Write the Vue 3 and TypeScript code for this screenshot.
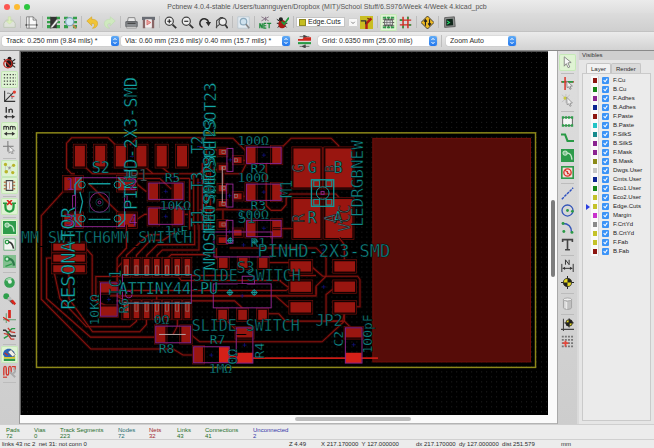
<script setup lang="ts">
import { reactive, ref } from 'vue'

type Tool = { id?: string; label?: string; on?: boolean; sep?: boolean }
type Box = [number, number, number, number]
type Label = { t: string; x: number; y: number; s: number; c?: string; v?: boolean }

const icons: Record<string, string> = {
  save: '<path d="M1 9l3-4h8l3 4v5H1z" fill="#dfe3da" stroke="#b9c4b0"/><path d="M6.500 1h3v5h2.500L8 10 4 6h2.500z" fill="#dcefbb" stroke="#c3dda0" stroke-width=".6"/>',
  page: '<path d="M2 1h8l4 4v10H2z" fill="#fafafa" stroke="#777"/><path d="M10 1v4h4M5 1v14M2 11h12" fill="none" stroke="#666"/><path d="M0 11l2-1.500v3zM16 11l-2-1.500v3z" fill="#333"/>',
  modedit: '<path d="M0 1h5v3H0zM0 6h5v3H0zM0 11h5v4H0zM11 1h5v3h-5zM11 6h5v3h-5zM11 11h5v4h-5z" fill="#35a04a"/><path d="M4 1h8v14H4z" fill="#333"/><path d="M5 13l7-9 2 2-7 8-3 1z" fill="#f4f4f4" stroke="#555" stroke-width=".7"/>',
  modview: '<path d="M0 1h5v3H0zM0 6h5v3H0zM0 11h5v4H0zM11 1h5v3h-5zM11 6h5v3h-5zM11 11h5v4h-5z" fill="#35a04a"/><circle cx="7" cy="7" r="5" fill="#cfe6f2" stroke="#7fa6ba" stroke-width="1.500"/><path d="M11 11l4 4" stroke="#b98b50" stroke-width="2.400"/>',
  undo: '<path d="M1 6l6-5v3c6 0 8 3 7 7-1 3-3 4-6 4 3-2 4-6-1-6v3z" fill="#f0c437" stroke="#d5a21b" stroke-width=".7"/>',
  redo: '<path d="M15 6L9 1v3C3 4 1 7 2 11c1 3 3 4 6 4-3-2-4-6 1-6v3z" fill="#cfe9bf" stroke="#bcdcab" stroke-width=".7"/>',
  print: '<path d="M4 2h8l1 5H3z" fill="#e8e8e8" stroke="#777"/><path d="M1 7h14v6H1z" fill="#8a8d90" stroke="#505356"/><path d="M2 13h12v2H2z" fill="#dcdcdc" stroke="#777" stroke-width=".6"/><path d="M3 9h10" stroke="#3b3b3b" stroke-width="1.300"/>',
  plot: '<path d="M0 1h16v4H0z" fill="#6a6d74"/><path d="M1 5h3v10H1zM12 5h3v10h-3z" fill="#866"/><path d="M4 4h8v10H4z" fill="#f4eded"/><path d="M6 5l5 3-5 3z" fill="#e7a5a0" stroke="#c33" stroke-width=".6"/>',
  zoomin: '<circle cx="6.500" cy="6.500" r="5" fill="#eee" stroke="#444" stroke-width="1.500"/><path d="M10.500 10.500l4.500 4.500" stroke="#333" stroke-width="2.200"/><path d="M4 6.500h5M6.500 4v5" stroke="#222" stroke-width="1.400"/>',
  zoomout: '<circle cx="6.500" cy="6.500" r="5" fill="#eee" stroke="#444" stroke-width="1.500"/><path d="M10.500 10.500l4.500 4.500" stroke="#333" stroke-width="2.200"/><path d="M4 6.500h5" stroke="#222" stroke-width="1.400"/>',
  redraw: '<path d="M5.500 14A5.500 5.500 0 1 1 13 7.500" fill="none" stroke="#2b2b2b" stroke-width="2"/><path d="M9.500 7.500H16l-3 5z" fill="#2b2b2b"/>',
  fit: '<path d="M2 15V6l5-4h3M1 14l5-4" fill="none" stroke="#444" stroke-width="1.300"/><circle cx="9.500" cy="7" r="4.500" fill="#eee" stroke="#444" stroke-width="1.500"/><path d="M12.500 10.500l3 4.500" stroke="#333" stroke-width="2"/>',
  find: '<path d="M1 1h14v14H1z" fill="#e4edf3" stroke="#b9c6cf"/><circle cx="8" cy="7" r="4" fill="#cfe2ee" stroke="#8caabd" stroke-width="1.500"/><path d="M11 10l4 5" stroke="#888" stroke-width="2"/>',
  net: '<path d="M1 15V9l3 6V9M6 9v6h3M6 12h3M6 9h3M10 9h5M12.500 9v6" stroke="#1e8a3b" stroke-width="1.500" fill="none"/><path d="M3 1l9 5M3 6l9-5M8 1v5" stroke="#878" stroke-width="1.200"/>',
  drc: '<path d="M1 4l4 3M1 9h3M2 14l4-3M14 9l-4 0M13 14l-3-3" stroke="#222" stroke-width="1.200"/><ellipse cx="7.500" cy="10" rx="4.500" ry="5" fill="#a81c16"/><circle cx="6" cy="4" r="2.500" fill="#222"/><path d="M7 7l3 3 6-8" stroke="#1f9a3b" stroke-width="2.200" fill="none"/>',
  autotrack: '<path d="M0 0h16v16H0z" fill="#c9bd22"/><path d="M8 16V9l6-6" stroke="#b31f14" stroke-width="3" fill="none"/><path d="M1 6h6v4" stroke="#333" stroke-width="1.600" fill="none"/><path d="M9 3l3 1" stroke="#6b2b10" stroke-width="1.500"/>',
  modmode: '<path d="M1 4h14M1 8h14M1 12h14M4 1v14M8 1v14M12 1v14" stroke="#444" stroke-width="1"/><path d="M1 1h4v2H1zM6 1h4v2H6zM11 1h4v2h-4zM1 13h4v2H1zM6 13h4v2H6zM11 13h4v2h-4z" fill="#2f9c49"/><path d="M3 5h10v6H3z" fill="#ddd" stroke="#444" stroke-width=".8"/><path d="M3 8h10M6 5v6M10 5v6" stroke="#666" stroke-width=".8"/>',
  trackmode: '<path d="M5 1v14M11 1v14" stroke="#cf2a20" stroke-width="1.800"/><path d="M1 5h14M1 11h14" stroke="#cf2a20" stroke-width="1.600"/><path d="M1 5h3M12 11h3M11 1v3M5 12v3" stroke="#2a9a46" stroke-width="2"/>',
  route: '<path d="M8 0l8 8-8 8-8-8z" fill="#f0bb25" stroke="#222"/><path d="M5.500 12V6M3.800 7l1.700-2.500L7.200 7M10.500 4v6M8.800 9l1.700 2.500L12.200 9" stroke="#222" stroke-width="1.400" fill="none"/>',
  console: '<path d="M2 2l12-1 1 12-13 1z" fill="#8d8f8e" stroke="#555"/><path d="M4 4l8-.5.500 8L4 12z" fill="#10251a"/><path d="M5 6l3 2-3 2" stroke="#28e070" stroke-width="1.300" fill="none"/>',
  nodrc: '<ellipse cx="8" cy="9.500" rx="4.500" ry="5" fill="#201818"/><circle cx="8" cy="3.500" r="2.500" fill="#201818"/><path d="M1 4l4 3M15 4l-4 3M15 14l-4-3M15 9h-4" stroke="#222" stroke-width="1.300"/><circle cx="6" cy="9.500" r="5" fill="none" stroke="#c22a22" stroke-width="1.600"/><path d="M2.500 6l7 7" stroke="#c22a22" stroke-width="1.600"/>',
  dots: '<path d="M1 2h15M1 6h15M1 10h15M1 14h15" stroke="#444" stroke-width="1.400" stroke-dasharray="1.600 2"/>',
  polar: '<path d="M2 1v13h13M2 14L13 3" stroke="#333" stroke-width="1.300" fill="none"/><path d="M5 4c4-1 7 3 6 7" stroke="#555" fill="none"/><circle cx="14" cy="2.500" r="2" fill="#e23a2e"/><path d="M10 8h4" stroke="#d44" stroke-width="1.500"/>',
  inch: '<path d="M4 0v7M7.500 7V2.500M7.500 4c1-2 4-2 4 .5V7" stroke="#333" stroke-width="1.700" fill="none"/><path d="M3 12h10" stroke="#333" stroke-width="1.300"/><path d="M1 12l4-2.500v5zM15 12l-4-2.500v5z" fill="#333"/>',
  mm: '<path d="M1 7V2.500M1 4c1-1.800 3-1.500 3 .5V7M4 4.500c1-2.300 3-1.500 3 .5V7M9 7V2.500M9 4c1-1.800 3-1.500 3 .5V7M12 4.500c1-2.300 3-1.500 3 .5V7" stroke="#333" stroke-width="1.300" fill="none"/><path d="M3 12h10" stroke="#333" stroke-width="1.300"/><path d="M1 12l4-2.500v5zM15 12l-4-2.500v5z" fill="#333"/>',
  cursor: '<path d="M6 0v13M0 6.500h13" stroke="#777" stroke-width="1.200"/><path d="M7 6l7 6-3 .4 1.500 3-1.500.6-1.500-3L7.500 15z" fill="#eee" stroke="#777" stroke-width=".8"/>',
  ratsnest: '<path d="M3 3l8 9M12 4L4 12M3 3v9" stroke="#bbb" stroke-width=".8"/><circle cx="3" cy="3" r="2" fill="#b8b62a"/><circle cx="13" cy="4" r="2" fill="#b8b62a"/><circle cx="4" cy="12" r="2.200" fill="#b8b62a"/><circle cx="12" cy="13" r="2" fill="#b8b62a"/><circle cx="8" cy="7" r="1.500" fill="#999"/>',
  modrats: '<path d="M4 2h8v12H4z" fill="#eee" stroke="#444" stroke-width="1.300"/><path d="M1 4h3M1 8h3M1 12h3M12 4h3M12 8h3M12 12h3" stroke="#b87c56" stroke-width="1.800"/><path d="M8 4v8" stroke="#c98" stroke-width="1.300"/>',
  autodel: '<path d="M3 4v5c0 7 10 7 10 0V4" fill="none" stroke="#239a3e" stroke-width="2.800"/><path d="M0 4h5M11 4h5" stroke="#239a3e" stroke-width="2"/><path d="M5 0l6 6M11 0L5 6" stroke="#d8281e" stroke-width="2"/>',
  zonefill: '<path d="M0 0h16v16H0z" fill="#2e9b4b"/><circle cx="5" cy="5" r="2.600" fill="#7fc590" stroke="#c5e6ca" stroke-width="1.300"/><path d="M7 5c5 0 6 3 6.500 8" fill="none" stroke="#c5e6ca" stroke-width="1.800"/>',
  zoneout: '<path d="M1 1h14v14H1z" fill="#f2f5f2" stroke="#5aa86c"/><circle cx="5" cy="5" r="2.200" fill="#fff" stroke="#2a9a46" stroke-width="1.600"/><path d="M7 5c4 0 5 3 6 8" fill="none" stroke="#333" stroke-width="2"/>',
  zonehatch: '<path d="M0 0h16v16H0z" fill="#82bf90"/><circle cx="5" cy="5" r="2.600" fill="#cdeed3" stroke="#2e9b4b" stroke-width="1.500"/><path d="M7 5c5 0 6 3 6.500 8" fill="none" stroke="#2e7b4b" stroke-width="3"/><path d="M3 14l8-3" stroke="#2e9b4b" stroke-width="1.500"/>',
  via: '<circle cx="8" cy="8" r="6.500" fill="#35a052"/><path d="M3 5a6 6 0 0 1 8-2L8 8z" fill="#9ed3aa"/><circle cx="8.500" cy="7" r="2.400" fill="#e6efe8"/>',
  pads: '<path d="M4 4l9 9" stroke="#555" stroke-width="3"/><circle cx="4" cy="4" r="3.600" fill="#2fa04c"/><circle cx="8" cy="7" r="2.500" fill="#bbb"/><path d="M9 10l5 5 2-2-4-5z" fill="#d8281e"/>',
  tracks: '<path d="M8 0v10" stroke="#d8281e" stroke-width="3.400"/><path d="M0 12h16M4 4v12" stroke="#5f9a6c" stroke-width="1.200"/><path d="M0 9l8 5" stroke="#d8281e" stroke-width="1.500"/>',
  contrast: '<path d="M0 4h3l7 7h6" stroke="#333" stroke-width="1.800" fill="none"/><path d="M1 14l5-3V7l5-5h4" stroke="#2a9a46" stroke-width="1.800" fill="none"/><path d="M6 1l4 5 5 1M1 8l5 1 4 6h4" stroke="#c8382e" stroke-width="1.500" fill="none"/>',
  layers: '<path d="M1 13h14v3H1z" fill="#2e9b4b"/><path d="M1 10h14v3H1z" fill="#d9c92d"/><path d="M0 8c0-5 4-8 9-7l5 4v6H2z" fill="#2a63b8"/><path d="M6 5l4-3 5 6-3 3z" fill="#f2efe6" stroke="#555" stroke-width=".7"/><path d="M2 6l4 3" stroke="#cf2a20" stroke-width="1.500"/>',
  wave: '<path d="M1 13V4c0-3 3-3 3 0v6c0 3 3 3 3 0V4c0-3 3-3 3 0v7" fill="none" stroke="#d3382e" stroke-width="1.700"/><path d="M11 2h4v4" fill="none" stroke="#d3382e" stroke-width="1.500"/><path d="M8 8l7 7M13 4c3 3 2 6-1 6" stroke="#a9a9a9" stroke-width="2.400" fill="none"/><path d="M0 15h5" stroke="#d3382e" stroke-width="1.500"/>',
  arrow: '<path d="M4 1l8.500 7-4 .5 2.300 5-2 .9-2.300-5L4 12.500z" fill="#f7f7f7" stroke="#777" stroke-width="1"/>',
  highlight: '<path d="M5 0v16M0 6h16" stroke="#d8281e" stroke-width="1.700"/><path d="M1 6h3M8 6h7" stroke="#2a9a46" stroke-width="2"/><path d="M7 5l7 6-3 .5 1.500 3-1.500.6-1.500-3L7.500 13z" fill="#eee" stroke="#666" stroke-width=".8"/>',
  local: '<path d="M1 1l12 10M1 10L11 1M6 0v11" stroke="#bbb" stroke-width=".9"/><circle cx="5" cy="5" r="2" fill="#cbca3e"/><path d="M7 4l7 7-3 .5 1.500 3-1.500.6-1.500-3L7.500 13z" fill="#eee" stroke="#777" stroke-width=".8"/>',
  module: '<path d="M2 3h12v10H2z" fill="#f6f6f6" stroke="#444"/><path d="M1 1.500h3v3H1zM5 1.500h2.500v3H5zM8.500 1.500H11v3H8.500zM12 1.500h3v3h-3zM1 11.500h3v3H1zM5 11.500h2.500v3H5zM8.500 11.500H11v3H8.500zM12 11.500h3v3h-3z" fill="#2fa04c"/>',
  track: '<path d="M0 3h5l3 8h8" fill="none" stroke="#2a9a46" stroke-width="2.600"/>',
  keepout: '<path d="M0 0h16v16H0z" fill="#2e9b4b"/><path d="M2 2h12v12H2z" fill="#f3dedb"/><circle cx="8" cy="8" r="4.500" fill="none" stroke="#d8382e" stroke-width="1.700"/><path d="M5 5l6 6M8 6v4" stroke="#d8382e" stroke-width="1.300"/>',
  line: '<path d="M1 15L15 1" stroke="#2c50c0" stroke-width="1.700" stroke-dasharray="3.500 1"/>',
  circle: '<circle cx="8" cy="8" r="6.800" fill="none" stroke="#3254b8" stroke-width="1.600"/><circle cx="8" cy="8" r="1.700" fill="#2a9a46"/><circle cx="14" cy="9" r="1.700" fill="#2a9a46"/>',
  arc: '<path d="M2 3c8 0 11 5 11 11" fill="none" stroke="#3254b8" stroke-width="1.700"/><circle cx="2.500" cy="3" r="1.800" fill="#2a9a46"/><circle cx="13.500" cy="14" r="1.800" fill="#2a9a46"/><circle cx="3.500" cy="13" r="1.800" fill="#2a9a46"/>',
  text: '<path d="M2 5V2h12v3M8 2v12M5 14.500h6" fill="none" stroke="#444" stroke-width="2"/>',
  dimension: '<path d="M1 6v10M15 6v10M2 11.500h12" stroke="#333" stroke-width="1.200"/><path d="M2 11.500l3-2v4zM14 11.500l-3-2v4z" fill="#333"/><path d="M5.500 7V1l4.500 6V1" stroke="#333" stroke-width="1.200" fill="none"/>',
  target: '<path d="M8 0v16M0 8h16" stroke="#222" stroke-width="1.200"/><circle cx="8" cy="8" r="5" fill="#e6d91f" stroke="#222"/><path d="M8 8V3a5 5 0 0 1 5 5zM8 8v5a5 5 0 0 1-5-5z" fill="#222"/>',
  trash: '<path d="M3 3v10c0 3 10 3 10 0V3z" fill="#c0c0c0" stroke="#8f8f8f" stroke-width=".8"/><path d="M5 5v9M7 6v9" stroke="#f4f4f4" stroke-width="1.200"/><ellipse cx="8" cy="3" rx="5" ry="1.800" fill="#ededed" stroke="#8f8f8f" stroke-width=".8"/>',
  origin: '<path d="M3 1v13h13M0 14h3M3 14v2" stroke="#444" stroke-width="1.300" fill="none"/><circle cx="10" cy="6" r="4" fill="#e6d91f" stroke="#222"/><path d="M10 6V2a4 4 0 0 1 4 4zM10 6v4a4 4 0 0 1-4-4zM4 6h12M10 0v12" fill="#222" stroke="#222" stroke-width=".8"/>',
  gridorg: '<path d="M1 2h14M1 6h14M1 10h14M1 14h14" stroke="#777" stroke-width="2.400" stroke-dasharray="2.400 1.400"/><path d="M5.500 7v7M2 10h7" stroke="#e2483c" stroke-width="2.200"/>',
  clear: '<path d="M2 2h12M7 0l4 2-4 2zM2 14h12M9 12l-4 2 4 2z" stroke="#444" stroke-width=".8" fill="#444"/><path d="M0 6h6l2-2h8M0 6h16" stroke="#cf2a20" stroke-width="2.200" fill="none"/><path d="M0 10h16" stroke="#2a9a46" stroke-width="2.600"/>'
}

const sep: Tool = { sep: true }
const t = (id: string, label: string, on = false): Tool => ({ id, label, on })

const fileTools: Tool[] = [
  t('save', 'Save board'), sep, t('page', 'Page settings'), sep,
  t('modedit', 'Footprint editor'), t('modview', 'Footprint viewer'), sep,
  t('undo', 'Undo'), t('redo', 'Redo'), sep, t('print', 'Print'), t('plot', 'Plot'), sep,
  t('zoomin', 'Zoom in'), t('zoomout', 'Zoom out'), t('redraw', 'Redraw'), t('fit', 'Zoom to fit'), sep,
  t('find', 'Find'), sep, t('net', 'Read netlist'), t('drc', 'Design rules check'), sep
]
const modeTools: Tool[] = [
  t('autotrack', 'Layer pair'), sep, t('modmode', 'Footprint mode', true),
  t('trackmode', 'Track mode'), sep, t('route', 'Autorouter'), sep, t('console', 'Scripting console')
]
const leftTools: Tool[] = [
  t('nodrc', 'Disable DRC'), t('dots', 'Show grid', true), t('polar', 'Polar coordinates'), t('inch', 'Inches'),
  t('mm', 'Millimetres', true), t('cursor', 'Cursor shape'), sep, t('ratsnest', 'Show ratsnest', true),
  t('modrats', 'Footprint ratsnest', true), sep, t('autodel', 'Auto delete tracks', true), sep,
  t('zonefill', 'Fill zones', true), t('zoneout', 'Outline zones'), t('zonehatch', 'Zone borders'), sep,
  t('via', 'Via sketch'), t('pads', 'Pad sketch'), t('tracks', 'Track sketch'), t('contrast', 'High contrast'), sep,
  t('layers', 'Layers manager', true), t('wave', 'Microwave tools'), sep
]
const rightTools: Tool[] = [
  t('arrow', 'Select', true), sep, t('highlight', 'Highlight net'), t('local', 'Local ratsnest'), sep,
  t('module', 'Add footprint'), t('track', 'Add track'), t('zonefill', 'Add zone'), t('keepout', 'Add keepout'), sep,
  t('line', 'Line'), t('circle', 'Circle'), t('arc', 'Arc'), t('text', 'Text'), sep,
  t('dimension', 'Dimension'), t('target', 'Target'), sep, t('trash', 'Delete'), sep,
  t('origin', 'Drill origin'), t('gridorg', 'Grid origin')
]

const layers = reactive([
  ['F.Cu', '#8c1510'], ['B.Cu', '#15861a'], ['F.Adhes', '#8a2390'], ['B.Adhes', '#0c2492'],
  ['F.Paste', '#8c1510'], ['B.Paste', '#22c3c6'], ['F.SilkS', '#178a8c'], ['B.SilkS', '#8a2390'],
  ['F.Mask', '#8a2390'], ['B.Mask', '#8b8a18'], ['Dwgs.User', '#c6c6c6'], ['Cmts.User', '#0c2492'],
  ['Eco1.User', '#15861a'], ['Eco2.User', '#c4c22a'], ['Edge.Cuts', '#c4c22a'], ['Margin', '#c832cc'],
  ['F.CrtYd', '#8a8a8a'], ['B.CrtYd', '#c4c22a'], ['F.Fab', '#c4c22a'], ['B.Fab', '#8c1510']
].map(([name, color]) => ({ name, color, shown: true })))
const current = ref('Edge.Cuts')
const tab = ref('Layer')

const combos = [
  { cls: 'track', label: 'Track width', value: 'Track: 0.250 mm (9.84 mils) *' },
  { cls: 'viasize', label: 'Via size', value: 'Via: 0.60 mm (23.6 mils)/ 0.40 mm (15.7 mils) *' },
  { cls: 'gridsize', label: 'Grid', value: 'Grid: 0.6350 mm (25.00 mils)' },
  { cls: 'zoom', label: 'Zoom', value: 'Zoom Auto' }
]

const stats = [
  ['Pads', '72', 'g'], ['Vias', '0', 'g'], ['Track Segments', '223', 'g'], ['Nodes', '72', 'c'],
  ['Nets', '32', 'r'], ['Links', '43', 'g'], ['Connections', '41', 'g'], ['Unconnected', '2', 'b']
]

/* Pads, grouped by the sheet region whose origin they are measured from. */
const row = (xs: number[], y: number, w: number, h: number): Box[] => xs.map(x => [x, y, w, h])
const topPads: Box[] = [
  ...row([135, 196, 258, 320, 381, 442], 228, 30, 62),
  ...row([103, 265], 322, 53, 40), ...row([103, 265], 432, 53, 40),
  ...row([357, 432], 341, 28, 48), ...row([357, 432], 416, 28, 48)
]
const rightPads: Box[] = [
  ...row([282, 378], 236, 81, 117), ...row([282, 378], 388, 81, 117),
  ...[232, 343, 452].flatMap(y => row([141, 218], y, 27, 48)),
  ...[237, 346, 455].flatMap((y): Box[] => [[57, y, 23, 19], [57, y + 48, 23, 17], [103, y + 25, 23, 18]])
]
const icX = [0, 1, 2, 3, 4, 5, 6].map(i => 281 + i * 30.6)
const lowPads: Box[] = [
  ...[57, 90, 122].map((y): Box => [70, y, 95, 21]),
  ...row(icX, 103, 17, 50), ...row(icX, 231, 17, 50),
  [213, 176, 48, 28], [213, 246, 48, 28],
  ...row([379, 455], 306, 28, 48), [493, 368, 27, 46], [621, 311, 48, 28], [949, 311, 48, 28],
  ...row([568, 628, 688], 100, 26, 30), ...row([566, 626, 686], 256, 26, 30),
  ...[110, 171, 233].flatMap(y => row([783, 915], y, 62, 31))
]
const hotPads: Box[] = [[568, 368, 30, 47], [621, 385, 49, 31], [948, 385, 49, 31]]

const topTraces = [
  'M135 312H125L110 296V220L125 204H235L262 230', 'M300 226L322 204H540', 'M165 291L188 312H260',
  'M260 312H440M345 291L370 312H540', 'M395 291L420 312', 'M100 365L34 438V480', 'M175 340L300 462',
  'M320 326H390L425 358', 'M320 342L350 366M320 450L345 434H357', 'M480 326V480M492 312V480M505 326V480M516 340V480',
  'M440 326H480', 'M460 434H475', 'M525 300L540 285'
]
const rightTraces = [
  'M0 205H100L140 245', 'M245 235L275 205H395L418 228V236', 'M370 232V350', 'M126 272H141', 'M126 380H141',
  'M70 310V345M70 420V450M66 300H10L0 312M0 420H200', 'M247 370H258M200 280V408L215 422H245L260 405V385L272 373H410L420 385',
  'M140 282L125 312H75', 'M0 232L60 242', 'M247 476H282', 'M20 240V480M32 260V480M8 280V480'
]
const lowTraces = [
  'M34 0V224L183 374H430L460 392H492', 'M165 100H50V222L182 338H378', 'M165 68L187 92V222L240 250',
  'M72 140L90 222L170 307H300L320 290V280', 'M198 230L230 260', 'M117 143V222L188 322H330L350 300V280',
  'M290 102V92L356 30H390', 'M320 102V92L362 47H400L440 20', 'M351 102V92L383 60H495V0', 'M382 102V92L398 76H508V0',
  'M412 102L425 90H540', 'M262 175V130L290 100', 'M198 220V156H280', 'M290 0V70L262 100V172', 'M443 153L455 168H750L775 187H783',
  'M473 153H600', 'M262 198H770L783 187', 'M240 214H738L775 247H783', 'M381 230V215M262 215L290 230', 'M485 214H860V185L890 155V100L860 70H600',
  'M260 229H615L638 250V256', 'M593 268V290L625 322', 'M713 268H748L768 290H940L945 264', 'M720 114H783', 'M845 125L880 155H985L992 165V247H976',
  'M915 190L890 210V290L945 290L965 310', 'M483 330L510 352H878L945 290V264', 'M930 40L945 60V110', 'M443 280V305L430 330', 'M412 280V300M381 280V305',
  'M598 400H620', 'M500 168H755M560 70V100L575 110', 'M730 12H790', 'M780 153H860', 'M860 186V210'
]
const purpleTop: Box[] = [[357, 340, 103, 49], [357, 415, 103, 49], [137, 324, 147, 147]]
const purpleRight: Box[] = [[141, 232, 104, 49], [141, 343, 104, 49], [141, 452, 104, 49], [82, 236, 18, 69], [80, 343, 20, 69], [80, 452, 20, 69]]
const purpleLow: Box[] = [
  [212, 175, 50, 100], [378, 305, 105, 50], [492, 367, 107, 48], [620, 310, 50, 106], [948, 310, 50, 106],
  [553, 22, 175, 75], [551, 178, 174, 72], [638, 155, 37, 23], [278, 150, 207, 86]
]

const silk: Label[] = [
  { t: 'S2', x: 92, y: 173, s: 15 }, { t: 'JP1', x: 121, y: 181, s: 15, c: 'dim' },
  { t: 'R5', x: 165, y: 182, s: 13 }, { t: '10KΩ', x: 160, y: 210, s: 13 }, { t: '1µF', x: 165, y: 235, s: 13 },
  { t: 'T2', x: 203, y: 154, s: 15, v: true }, { t: 'T3', x: 203, y: 190, s: 15, v: true }, { t: 'T1', x: 203, y: 227, s: 15, v: true },
  { t: 'NMOSFETSOT23', x: 216, y: 198, s: 16, v: true }, { t: 'NMOSFETSOT23', x: 215, y: 234, s: 16, v: true },
  { t: 'NMOSFETSOT23', x: 215, y: 271, s: 16, v: true },
  { t: '100Ω', x: 238, y: 145, s: 13 }, { t: '100Ω', x: 238, y: 182, s: 13 }, { t: '100Ω', x: 238, y: 219, s: 13 },
  { t: 'R2', x: 251, y: 173, s: 13 }, { t: 'R3', x: 251, y: 210, s: 13 }, { t: 'R1', x: 251, y: 247, s: 13 },
  { t: 'S1', x: 238, y: 223, s: 15, c: 'mid' }, { t: 'M1', x: 293, y: 198, s: 15, v: true, c: 'mid' },
  { t: 'G', x: 308, y: 173, s: 15 }, { t: 'B', x: 334, y: 173, s: 15 }, { t: 'R', x: 308, y: 223, s: 15 }, { t: 'A', x: 334, y: 223, s: 15 },
  { t: 'G', x: 305, y: 173, s: 15, v: true, c: 'dim' }, { t: 'B', x: 335, y: 173, s: 13, v: true, c: 'dim' },
  { t: 'R', x: 305, y: 223, s: 15, v: true, c: 'dim' }, { t: 'A', x: 337, y: 223, s: 15, v: true, c: 'dim' },
  { t: 'VCC', x: 351, y: 232, s: 15, v: true, c: 'dim' }, { t: 'LEDRGBNEW', x: 364, y: 227, s: 16, v: true, c: 'mid' },
  { t: 'MM_SWITCH6MM_SWITCH', x: 21, y: 243, s: 15, c: 'mid' },
  { t: 'PINHD-2X3-SMD', x: 137, y: 210, s: 17, v: true }, { t: 'PINHD-2X3-SMD', x: 258, y: 257, s: 17, c: 'mid' },
  { t: 'SLIDE_SWITCH', x: 193, y: 281, s: 15, c: 'mid' }, { t: 'SLIDE_SWITCH', x: 192, y: 332, s: 15, c: 'mid' },
  { t: 'S3', x: 237, y: 273, s: 15, c: 'mid' }, { t: 'ATTINY44-PU', x: 119, y: 294, s: 15 },
  { t: 'RESONATOR', x: 75, y: 310, s: 19, v: true }, { t: 'IC1', x: 121, y: 297, s: 15, v: true, c: 'mid' },
  { t: 'R6', x: 128, y: 314, s: 13, v: true }, { t: '10KΩ', x: 99, y: 326, s: 13, v: true },
  { t: '0Ω', x: 154, y: 325, s: 13 }, { t: 'R8', x: 159, y: 354, s: 13 }, { t: 'R7', x: 210, y: 345, s: 13 },
  { t: '1MΩ', x: 209, y: 374, s: 13 }, { t: 'R4', x: 264, y: 359, s: 13, v: true }, { t: '0Ω', x: 237, y: 365, s: 13, v: true },
  { t: 'JP2', x: 316, y: 327, s: 15, c: 'mid' }, { t: 'C2', x: 344, y: 347, s: 13, v: true }, { t: '100pF', x: 373, y: 354, s: 13, v: true },
  { t: '1', x: 66, y: 190, s: 15, c: 'mag' }, { t: '2', x: 129, y: 190, s: 15, c: 'mag' },
  { t: '3', x: 65, y: 226, s: 15, c: 'mag' }, { t: '4', x: 129, y: 226, s: 15, c: 'mag' }
]

const regions = [
  { at: 'translate(30 70) scale(.3333)', pads: topPads, traces: topTraces },
  { at: 'translate(200 70) scale(.3333)', pads: rightPads, traces: rightTraces },
  { at: 'translate(30 225) scale(.3333)', pads: lowPads, traces: lowTraces }
]
const outlines = [
  { at: regions[0].at, boxes: purpleTop }, { at: regions[1].at, boxes: purpleRight }, { at: regions[2].at, boxes: purpleLow }
]
const ledCorners: Box[] = [[343, 333, 17, 17], [380, 333, 17, 17], [343, 389, 17, 17], [380, 389, 17, 17]]
</script>

<template>
  <div class="window">
    <header class="titlebar">
      <div class="lights"><button class="close" aria-label="Close" /><button class="min" aria-label="Minimise" /><button class="max" aria-label="Full screen" /></div>
      <h1>Pcbnew 4.0.4-stable /Users/tuannguyen/Dropbox (MIT)/School Stuff/6.S976/Week 4/Week 4.kicad_pcb</h1>
    </header>

    <nav class="toolbar">
      <template v-for="(b, i) in fileTools" :key="i">
        <span v-if="b.sep" class="sep" />
        <button v-else class="tool" :aria-label="b.label"><svg viewBox="0 0 16 16" v-html="icons[b.id!]" /></button>
      </template>
      <label class="layerpick">
        <span class="field" />
        <span class="sw" />
        <select v-model="current" aria-label="Active layer"><option v-for="l in layers" :key="l.name">{{ l.name }}</option></select>
        <svg class="chev" viewBox="0 0 10 10"><path d="M2.500 4L5 6.500 7.500 4" fill="none" stroke="#555" /></svg>
      </label>
      <template v-for="(b, i) in modeTools" :key="i">
        <span v-if="b.sep" class="sep" />
        <button v-else class="tool" :class="{ on: b.on }" :aria-label="b.label"><svg viewBox="0 0 16 16" v-html="icons[b.id!]" /></button>
      </template>
    </nav>

    <nav class="options">
      <template v-for="(c, i) in combos" :key="c.cls">
        <button v-if="i === 2" class="tool wide" aria-label="Track and via sizes"><svg viewBox="0 0 16 16" v-html="icons.clear" /></button>
        <span v-if="i === 3" class="sep" />
        <label class="combo" :class="c.cls">
          <select :aria-label="c.label"><option>{{ c.value }}</option></select>
          <svg viewBox="0 0 8 10"><path d="M2.500 4L4 2.300 5.500 4M2.500 6L4 7.700 5.500 6" fill="none" stroke="#fff" /></svg>
        </label>
      </template>
    </nav>

    <main class="work">
      <nav class="side left">
        <template v-for="(b, i) in leftTools" :key="i">
          <span v-if="b.sep" class="sep" />
          <button v-else class="tool" :class="{ on: b.on }" :aria-label="b.label"><svg viewBox="0 0 16 16" v-html="icons[b.id!]" /></button>
        </template>
      </nav>

      <section class="view">
        <div class="sheet">
          <svg class="board" viewBox="21 52 528 364" preserveAspectRatio="xMinYMin slice" role="img" aria-label="Board layout">
            <defs>
              <pattern id="dots" width="5" height="5" patternUnits="userSpaceOnUse"><rect x="2" y="2" width="1" height="1" fill="#222" /></pattern>
            </defs>
            <rect x="0" y="0" width="1600" height="1200" fill="#000" />
            <rect x="0" y="0" width="1600" height="1200" fill="url(#dots)" />
            <rect x="373.500" y="138.500" width="158" height="224" class="zone" />
            <rect x="36.500" y="133" width="500" height="235" class="edge" />
            <g v-for="(r, i) in regions" :key="i" :transform="r.at">
              <path v-for="(d, j) in r.traces" :key="'h' + j" :d="d" class="halo" />
              <path v-for="(d, j) in r.traces" :key="'t' + j" :d="d" class="trace" />
              <rect v-for="(p, j) in r.pads" :key="'c' + j" :x="p[0] - 5" :y="p[1] - 5" :width="p[2] + 10" :height="p[3] + 10" class="clear" />
              <rect v-for="(p, j) in r.pads" :key="'p' + j" :x="p[0]" :y="p[1]" :width="p[2]" :height="p[3]" class="pad" />
            </g>
            <g :transform="regions[2].at">
              <path d="M598 396H620M670 401H1046" class="hot-line" />
              <rect v-for="(p, j) in hotPads" :key="j" :x="p[0]" :y="p[1]" :width="p[2]" :height="p[3]" class="hot" />
              <rect v-for="(x, j) in icX" :key="'a' + j" :x="x + 4" y="124" width="9" height="28" class="pin" />
              <rect v-for="(x, j) in icX" :key="'b' + j" :x="x + 4" y="234" width="9" height="26" class="pin" />
              <circle cx="297" cy="210" r="10" class="mag-line" />
              <path d="M591 204h20M601 194v20M664 204h20M674 194v20M592 48h20M602 38v20M666 50h20M676 40v20" class="teal" />
              <circle v-for="p in [[601, 204], [674, 204], [602, 48], [676, 50]]" :key="p.join()" :cx="p[0]" :cy="p[1]" r="7" class="teal" />
              <path d="M388 330H468" class="white-line" />
              <path v-for="p in [[237, 225], [545, 392], [645, 362], [973, 361], [638, 214], [642, 61], [883, 187], [383, 193], [117, 100], [883, 77]]" :key="p.join()" :d="`M${p[0] - 6} ${p[1]}h12M${p[0]} ${p[1] - 6}v12`" class="anchor" />
            </g>
            <g :transform="regions[0].at">
              <circle cx="209" cy="398" r="30" class="mag-line" /><circle cx="209" cy="398" r="11" class="teal faint" /><circle cx="209" cy="398" r="4" class="mag-line" />
              <rect x="178" y="367" width="60" height="60" class="teal faint" />
              <path d="M136 377h-8v38h8M284 377h8v38h-8" class="mag-line" />
              <path d="M402 365h12M408 359v12M402 440h12M408 434v12M425 323h12M300 260h12M502 230h12M502 338h12" class="anchor" />
            </g>
            <g :transform="regions[1].at">
              <rect x="336" y="330" width="67" height="80" class="teal bold" />
              <rect v-for="(p, j) in ledCorners" :key="j" :x="p[0]" :y="p[1]" :width="p[2]" :height="p[3]" class="teal" />
              <circle cx="370" cy="370" r="19" class="teal" /><rect x="365" y="365" width="9" height="9" class="mag-line" />
              <path d="M68 290V400" class="white-line" />
              <rect v-for="(p, j) in [[67, 242], [67, 290], [104, 267], [67, 350], [67, 398], [104, 374], [67, 460]]" :key="'q' + j" :x="p[0]" :y="p[1]" width="10" height="9" class="pin" />
              <path d="M187 256h12M193 250v12M187 367h12M193 361v12M187 476h12M193 470v12M86 270h12M92 264v12M84 378h12M90 372v12M84 486h12M90 480v12" class="anchor" />
            </g>
            <g v-for="(o, i) in outlines" :key="'o' + i" :transform="o.at">
              <rect v-for="(p, j) in o.boxes" :key="j" :x="p[0]" :y="p[1]" :width="p[2]" :height="p[3]" class="mag-line" />
            </g>
            <path :transform="regions[2].at" d="M278 150H485M278 236H485" class="teal" />
            <g :transform="regions[0].at">
              <path d="M135 375V345l20-22M265 323l20 22v30M135 425v25l20 21M265 471l20-21v-25M176 342h66M176 449h66M150 366l8 30-8 36" class="teal bold" />
              <circle v-for="p in [[156, 345], [263, 345], [156, 447], [263, 447]]" :key="p.join()" :cx="p[0]" :cy="p[1]" r="10" class="teal" />
            </g>
            <text v-for="(l, i) in silk" :key="'s' + i" :x="l.x" :y="l.y" :font-size="l.s" :class="l.c" :transform="l.v ? `rotate(-90 ${l.x} ${l.y})` : undefined">{{ l.t }}</text>
          </svg>
        </div>
        <div class="vbar"><span /></div>
        <div class="hbar"><span /></div>
      </section>

      <nav class="side right">
        <template v-for="(b, i) in rightTools" :key="i">
          <span v-if="b.sep" class="sep" />
          <button v-else class="tool" :class="{ on: b.on }" :aria-label="b.label"><svg viewBox="0 0 16 16" v-html="icons[b.id!]" /></button>
        </template>
      </nav>

      <aside class="visibles">
        <h2>Visibles</h2>
        <div class="tabs">
          <button v-for="n in ['Layer', 'Render']" :key="n" :class="{ active: tab === n }" @click="tab = n">{{ n }}</button>
        </div>
        <ul>
          <li v-for="l in layers" :key="l.name">
            <svg class="mark" viewBox="0 0 4 6"><path v-if="current === l.name" d="M0 0l4 3-4 3z" fill="#2b3fe0" /></svg>
            <span class="chip"><i :style="{ background: l.color }" /></span>
            <label><input v-model="l.shown" type="checkbox"><span>{{ l.name }}</span></label>
          </li>
        </ul>
      </aside>
    </main>

    <dl class="stats">
      <div v-for="s in stats" :key="s[0]" :class="s[2]"><dt>{{ s[0] }}</dt><dd>{{ s[1] }}</dd></div>
    </dl>
    <footer class="status">
      <span>links 43 nc 2&nbsp; net 31: not conn 0</span><span>Z 4.49</span><span>X 217.170000&nbsp; Y 127.000000</span>
      <span>dx 217.170000&nbsp; dy 127.000000&nbsp; dist 251.579</span><span>mm</span>
    </footer>
  </div>
</template>

<style>
body { margin: 0; background: #ececec; }
</style>

<style scoped>
* { box-sizing: border-box; }
.window { display: flex; flex-direction: column; min-height: 100vh; background: #ececec; color: #2b2b2b; font: 6px/7px "Liberation Sans", Arial, sans-serif; overflow: hidden; }
button { padding: 0; border: 0; background: none; font: inherit; color: inherit; }
h1, h2, dl, dd, ul { margin: 0; padding: 0; font: inherit; }

.titlebar { display: grid; grid-template-columns: 1fr auto 1fr; align-items: center; height: 13px; padding: 0 4px; background: linear-gradient(#ebebeb, #dedede); }
.titlebar h1 { color: #555; font-size: 7px; line-height: 9px; white-space: nowrap; }
.lights { display: flex; gap: 4px; }
.lights button { width: 6px; height: 6px; border-radius: 50%; }
.close { background: #fc5650; }
.min { background: #fdbb31; }
.max { background: #2cc63f; }

.toolbar, .options { display: flex; align-items: center; }
.toolbar { height: 18px; padding-left: 1px; background: linear-gradient(#dcdcdc, #cfcfcf); }
.options { height: 20px; padding-left: 2px; gap: 2px; background: linear-gradient(#ebebeb, #d2d2d2); border-top: 1px solid #c2c2c2; border-bottom: 1px solid #8a8a8a; }
.tool { flex: none; display: grid; place-items: center; width: 17px; height: 17px; border-radius: 2px; }
.tool svg { display: block; width: 13px; height: 13px; }
.tool.wide { width: 24px; }
.tool.on { background: #dff3d3; box-shadow: inset 0 0 0 1px #c6e8b8; }
.sep { flex: none; width: 1px; height: 12px; margin: 0 2px; background: #bdbdbd; }

.layerpick { display: grid; grid-template-columns: 49px 3px 10px; align-items: center; }
.layerpick > * { grid-row: 1; grid-column: 1; }
.field { height: 10px; background: #fff; border: 1px solid #c4c4c4; }
.sw { width: 7px; height: 7px; margin-left: 3px; background: #c5bd22; border: 1px solid #8d8820; }
.layerpick select { grid-column: 1 / 4; width: 100%; height: 12px; padding: 0 0 0 12px; border: 0; background: none; appearance: none; color: #222; font: 7px/12px "Liberation Sans", Arial, sans-serif; }
.chev { grid-column: 3 !important; width: 10px; height: 9px; background: #f8f8f8; border: 1px solid #d2d2d2; border-radius: 1px; pointer-events: none; }

.combo { display: flex; align-items: center; height: 10px; background: #fff; border-radius: 2px; box-shadow: 0 0 1px #888; }
.combo select { flex: 1; min-width: 0; height: 10px; padding: 0 0 0 4px; border: 0; background: none; appearance: none; color: #2b2b2b; font: 7px/10px "Liberation Sans", Arial, sans-serif; }
.combo svg { width: 8px; height: 10px; border-radius: 2px; background: linear-gradient(#62acf5, #2277ee); }
.track { width: 117px; }
.viasize { width: 169px; }
.gridsize { width: 119px; }
.zoom { width: 70px; }

.work { flex: 1; display: flex; min-height: 0; }
.side { display: flex; flex-direction: column; align-items: center; padding-top: 3px; background: linear-gradient(#dedede, #cdcdcd); }
.side .sep { width: 13px; height: 1px; margin: 2px 0 1px; background: #bcbcbc; }
.left { width: 20px; border-right: 1px solid #9b9b9b; }
.right { width: 20px; border-left: 1px solid #a9a9a9; }
.view { flex: 1; min-width: 0; display: grid; grid-template: 1fr 8px / 1fr 9px; background: #fafafa; border-bottom: 1px solid #b4b4b4; }
.sheet { position: relative; min-height: 364px; overflow: hidden; background: #000; border-top: 1px solid #555; border-left: 1px solid #666; }
.board { position: absolute; inset: 0; width: 100%; height: 100%; }
.vbar { padding: 149px 3px 0; }
.vbar span { display: block; height: 77px; border-radius: 2px; background: #7d7d7d; width: 4px; }
.hbar { padding: 2px 26% 0 52%; }
.hbar span { display: block; height: 4px; border-radius: 2px; background: #bdbdbd; }

.board text { fill: #14a6a6; stroke: #000; stroke-width: .4; font-family: "DejaVu Sans Mono", monospace; }
.board text.mid { fill: #0f8787; }
.board text.dim { fill: #52666a; }
.board text.mag { fill: #b02caa; }
.zone { fill: #560c08; stroke: #750f0a; }
.edge { fill: none; stroke: #8c8719; stroke-width: 1.5; }
.halo { fill: none; stroke: #240404; stroke-width: 9; }
.trace { fill: none; stroke: #86130e; stroke-width: 3.2; }
.clear { fill: #140202; stroke: #6a0f0b; stroke-width: 2; }
.pad { fill: #991610; }
.hot { fill: #d52018; }
.hot-line { fill: none; stroke: #c81c14; stroke-width: 5; }
.teal { fill: none; stroke: #129a9a; stroke-width: 3; }
.teal.bold { stroke-width: 4; }
.teal.faint { stroke: #0b5454; stroke-width: 2; }
.mag-line { fill: none; stroke: #8a248a; stroke-width: 3; }
.pin { fill: none; stroke: #8a8078; stroke-width: 2; }
.white-line { stroke: #b5a5a5; stroke-width: 3; }
.anchor { stroke: #14148c; stroke-width: 2; }

.visibles { display: flex; flex-direction: column; width: 77px; padding: 0 3px 3px; border-left: 2px solid #dadada; background: #e6e6e6; }
.visibles h2 { height: 9px; margin: 0 -3px; padding: 1px 3px 0; background: #cfcfcf; color: #333; }
.tabs { display: flex; margin: 3px 0 0 4px; }
.tabs button { height: 10px; padding: 1px 4px 0; border: 1px solid #c5c5c5; border-bottom: 0; border-radius: 2px 2px 0 0; background: #dadada; }
.tabs .active { background: #f2f2f2; }
ul { flex: 1; padding-top: 2px; list-style: none; border: 1px solid #cacaca; background: #ebebeb; }
li { display: flex; align-items: center; height: 9px; padding-left: 3px; gap: 1px; color: #222; }
.mark { width: 4px; height: 6px; }
.chip { display: grid; place-items: center; width: 8px; height: 9px; background: #fafafa; border-right: 1px solid #d8d8d8; }
.chip i { width: 4px; height: 5px; }
li label { display: flex; align-items: center; gap: 4px; margin-left: 2px; }
li input { display: grid; width: 7px; height: 7px; margin: 0; border-radius: 1px; background: #fff; appearance: none; }
li input:checked { background: #3b93f7; }
li input:checked::before { content: ""; background: #fff; clip-path: polygon(18% 50%, 30% 40%, 43% 58%, 70% 18%, 82% 28%, 45% 80%); }

.stats { display: grid; grid-template-columns: 28px 26px 58px 31px 28px 28px 48px 1fr; height: 15px; padding: 2px 0 0 6px; border-top: 1px solid #cfcfcf; line-height: 6px; }
.g { color: #276f2b; }
.c { color: #1f6d70; }
.r { color: #a02528; }
.b { color: #3436a8; }
.status { display: grid; grid-template-columns: 287px 32px 95px 145px 1fr; height: 9px; padding: 1px 0 0 2px; border-top: 1px solid #d0d0d0; white-space: nowrap; }
</style>
